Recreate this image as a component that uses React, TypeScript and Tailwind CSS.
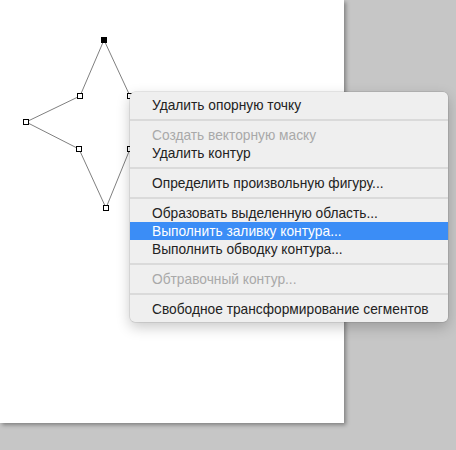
type Item = { label: string; disabled?: boolean; active?: boolean } | "sep"

const items: Item[] = [
  { label: "Удалить опорную точку" },
  "sep",
  { label: "Создать векторную маску", disabled: true },
  { label: "Удалить контур" },
  "sep",
  { label: "Определить произвольную фигуру..." },
  "sep",
  { label: "Образовать выделенную область..." },
  { label: "Выполнить заливку контура...", active: true },
  { label: "Выполнить обводку контура..." },
  "sep",
  { label: "Обтравочный контур...", disabled: true },
  "sep",
  { label: "Свободное трансформирование сегментов" },
]

// anchor points of the path, in canvas coordinates
const points = [
  { x: 104, y: 40, selected: true },
  { x: 130, y: 96 },
  { x: 186, y: 122 },
  { x: 130, y: 149 },
  { x: 106, y: 208 },
  { x: 79, y: 149 },
  { x: 26, y: 122 },
  { x: 80, y: 96 },
]

const PathDrawing = () => {
  const d = points.map((p, i) => `${i === 0 ? "M" : "L"}${p.x} ${p.y}`).join(" ") + " Z"
  return (
    <svg className="absolute left-0 top-0" width="344" height="423">
      <path d={d} fill="none" stroke="#808080" strokeWidth="1" />
      {points.map((p, i) => (
        <rect
          key={i}
          x={p.x - 2.5}
          y={p.y - 2.5}
          width="5"
          height="5"
          fill={p.selected ? "#000" : "#fff"}
          stroke="#000"
          strokeWidth="1"
        />
      ))}
    </svg>
  )
}

const ContextMenu = () => {
  return (
    <div className="absolute left-[130px] top-[92px] w-[318px] rounded-[5px] bg-[#efefef] py-[4px] shadow-[0_0_0_0.5px_rgba(0,0,0,0.15),0_5px_14px_rgba(0,0,0,0.22)] font-['Liberation_Sans',sans-serif] text-[13.75px]">
      {items.map((item, i) =>
        item === "sep" ? (
          <div key={i} className="flex h-[12px] items-center">
            <div className="h-[2px] w-full bg-[#dadada]" />
          </div>
        ) : (
          <div
            key={i}
            className={`flex h-[18px] items-center pl-[22px] pt-[1px] leading-none ${
              item.active ? "bg-[#3b8df6] text-white" : item.disabled ? "text-[#a9a9a9]" : "text-[#222]"
            }`}
          >
            {item.label}
          </div>
        )
      )}
    </div>
  )
}

export default function App() {
  return (
    <div className="relative h-[450px] w-[456px] overflow-hidden bg-[#c6c6c6]">
      <div className="relative h-[423px] w-[344px] bg-white shadow-[2px_2px_4px_rgba(0,0,0,0.35)]">
        <PathDrawing />
      </div>
      <ContextMenu />
    </div>
  )
}
